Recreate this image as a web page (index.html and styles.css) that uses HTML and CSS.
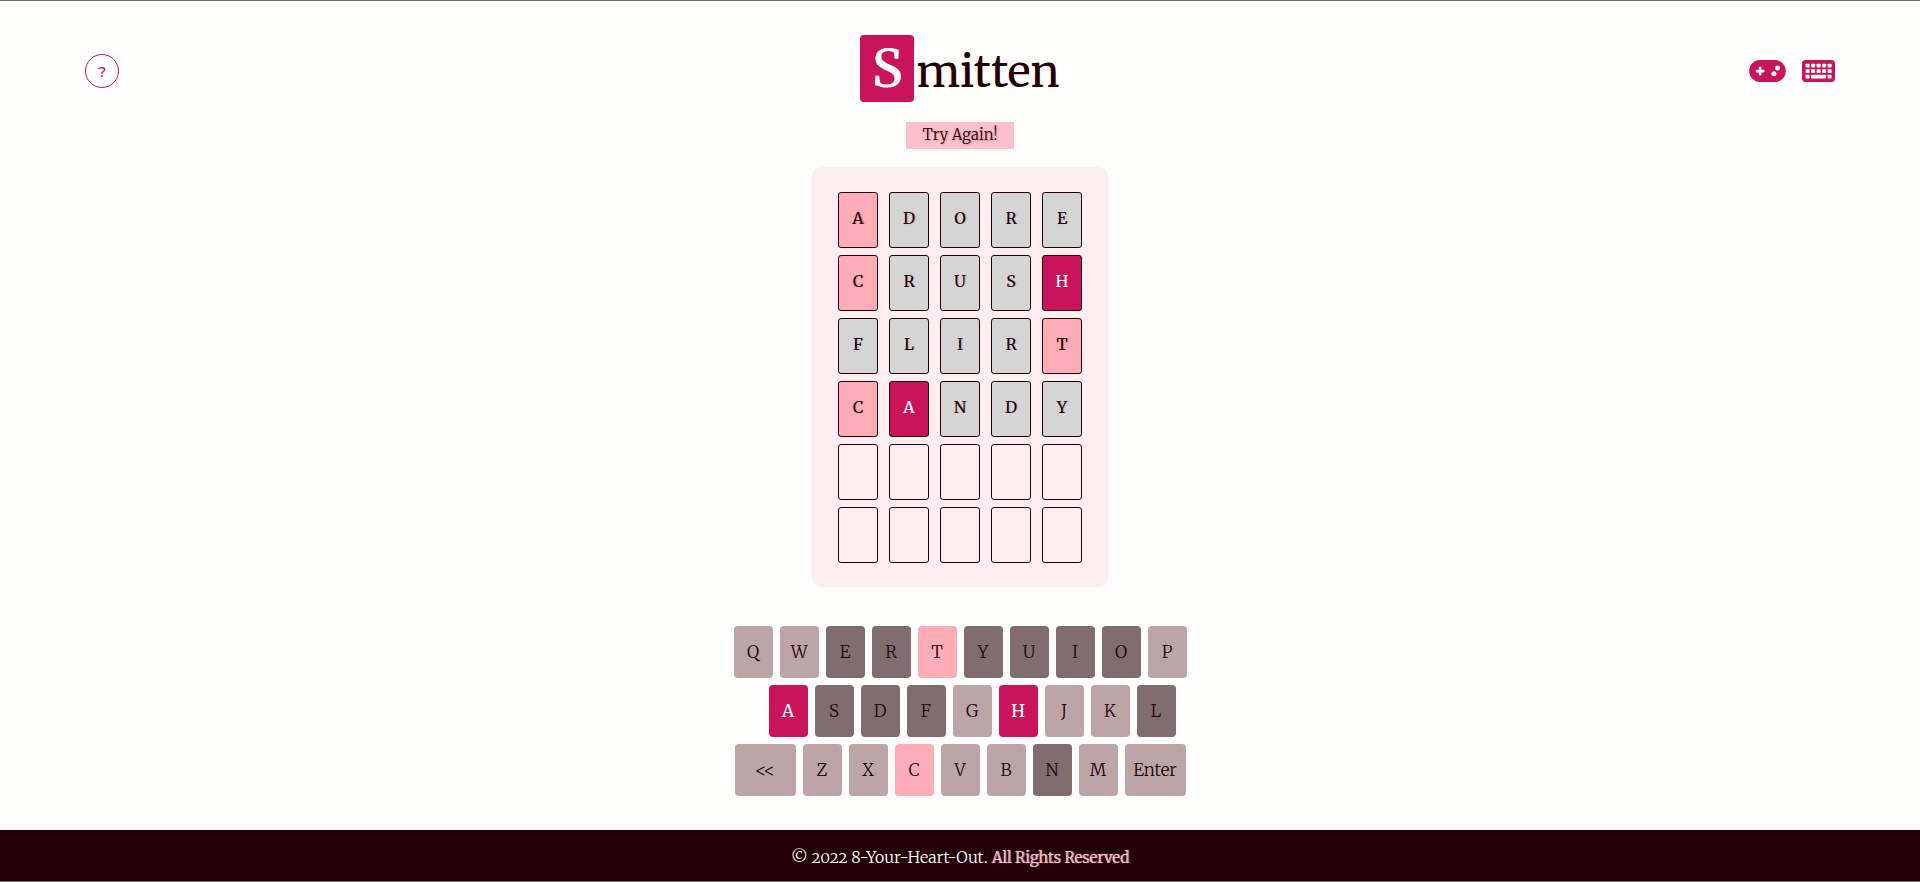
FILE: index.html
```html
<!DOCTYPE html>
<html lang="en">
<head>
<meta charset="utf-8">
<title>Smitten</title>
<link rel="stylesheet" href="styles.css">
</head>
<body>
<header class="header">
  <button class="help" type="button" aria-label="Help">?</button>
  <h1 class="logo"><span class="logo-tile">S</span><span>mitten</span></h1>
  <div class="tools">
    <button class="tool" type="button" aria-label="Game">
      <svg class="icon-pad" viewBox="0 64 640 384" aria-hidden="true"><path fill="currentColor" fill-rule="evenodd" d="M192 64C86 64 0 150 0 256S86 448 192 448H448c106 0 192-86 192-192s-86-192-192-192H192zM496 160a44 44 0 1 1 0 88 44 44 0 1 1 0-88zM388 304a44 44 0 1 1 88 0 44 44 0 1 1-88 0zM168 200c0-13.300 10.700-24 24-24s24 10.700 24 24v32h32c13.300 0 24 10.700 24 24s-10.700 24-24 24H216v32c0 13.300-10.700 24-24 24s-24-10.700-24-24V280H136c-13.300 0-24-10.700-24-24s10.700-24 24-24h32V200z"/></svg>
    </button>
    <button class="tool" type="button" aria-label="Keyboard">
      <svg class="icon-keys" viewBox="0 64 576 384" aria-hidden="true"><rect y="64" width="576" height="384" rx="64" fill="currentColor"/><g fill="#fffefd"><rect x="64" y="128" width="68" height="68" rx="8"/><rect x="160" y="128" width="68" height="68" rx="8"/><rect x="256" y="128" width="68" height="68" rx="8"/><rect x="352" y="128" width="68" height="68" rx="8"/><rect x="448" y="128" width="68" height="68" rx="8"/><rect x="64" y="224" width="68" height="68" rx="8"/><rect x="160" y="224" width="68" height="68" rx="8"/><rect x="256" y="224" width="68" height="68" rx="8"/><rect x="352" y="224" width="68" height="68" rx="8"/><rect x="448" y="224" width="68" height="68" rx="8"/><rect x="64" y="320" width="68" height="68" rx="8"/><rect x="160" y="320" width="260" height="68" rx="8"/><rect x="448" y="320" width="68" height="68" rx="8"/></g></svg>
    </button>
  </div>
</header>
<main class="game">
  <p class="message" role="status">Try Again!</p>
  <div class="board">
    <div class="cell near">A</div><div class="cell miss">D</div><div class="cell miss">O</div><div class="cell miss">R</div><div class="cell miss">E</div>
    <div class="cell near">C</div><div class="cell miss">R</div><div class="cell miss">U</div><div class="cell miss">S</div><div class="cell hit">H</div>
    <div class="cell miss">F</div><div class="cell miss">L</div><div class="cell miss">I</div><div class="cell miss">R</div><div class="cell near">T</div>
    <div class="cell near">C</div><div class="cell hit">A</div><div class="cell miss">N</div><div class="cell miss">D</div><div class="cell miss">Y</div>
    <div class="cell"></div><div class="cell"></div><div class="cell"></div><div class="cell"></div><div class="cell"></div>
    <div class="cell"></div><div class="cell"></div><div class="cell"></div><div class="cell"></div><div class="cell"></div>
  </div>
  <div class="keyboard">
    <div class="keys">
      <button class="key">Q</button><button class="key">W</button><button class="key used">E</button><button class="key used">R</button><button class="key near">T</button><button class="key used">Y</button><button class="key used">U</button><button class="key used">I</button><button class="key used">O</button><button class="key">P</button>
    </div>
    <div class="keys keys-home">
      <button class="key hit">A</button><button class="key used">S</button><button class="key used">D</button><button class="key used">F</button><button class="key">G</button><button class="key hit">H</button><button class="key">J</button><button class="key">K</button><button class="key used">L</button>
    </div>
    <div class="keys">
      <button class="key wide">&lt;&lt;</button><button class="key">Z</button><button class="key">X</button><button class="key near">C</button><button class="key">V</button><button class="key">B</button><button class="key used">N</button><button class="key">M</button><button class="key wide">Enter</button>
    </div>
  </div>
</main>
<footer class="footer"><p class="legal">© 2022 8-Your-Heart-Out. <strong class="rights">All Rights Reserved</strong></p></footer>
</body>
</html>
```
FILE: styles.css
```css
* {
  box-sizing: border-box;
}

body {
  margin: 0;
  min-height: 100vh;
  display: flex;
  flex-direction: column;
  background: #fffefd;
  border-top: 1px solid #65756b;
  border-bottom: 1px solid #65756b;
  color: #240006;
  font-family: Merriweather, "DejaVu Serif Condensed", "DejaVu Serif", serif;
  font-size: 16px;
}

button {
  padding: 0;
  border: 0;
  background: none;
  font: inherit;
  color: inherit;
  cursor: pointer;
}

.header {
  display: grid;
  grid-template: 72px / 1fr auto 1fr;
  align-items: center;
  padding: 34px 85px 15px;
}

.help {
  width: 34px;
  height: 34px;
  border: 1px solid #c9145c;
  border-radius: 50%;
  color: #c9145c;
  font-family: Montserrat, Lato, sans-serif;
  font-size: 15px;
  font-weight: 500;
}

.logo {
  display: flex;
  align-items: baseline;
  align-self: start;
  gap: 2px;
  margin: 0;
  font-size: 44px;
  font-weight: 400;
  line-height: 67px;
}

.logo-tile {
  width: 54px;
  border-radius: 4px;
  background: #c9145c;
  color: #fff;
  font-size: 52px;
  font-weight: 600;
  text-align: center;
}

.tools {
  display: flex;
  justify-content: flex-end;
  gap: 16px;
  color: #c9145c;
}

.tool svg {
  display: block;
  height: 22px;
}

.icon-pad {
  width: 37px;
}

.icon-keys {
  width: 33px;
}

.game {
  display: flex;
  flex-direction: column;
  align-items: center;
}

.message {
  margin: 0 0 18px;
  padding: 0 17px 1px;
  background: #ffc0cb;
  line-height: 26px;
  font-size: 15px;
  font-weight: 300;
  text-shadow: 1px 1px 2px #24000644;
}

.board {
  display: grid;
  grid-template-columns: repeat(5, 40px);
  gap: 7px 11px;
  padding: 25px 26px 24px;
  border-radius: 10px;
  background: #ffeef1;
  box-shadow: 0 0 2px #ffeef1;
}

.cell {
  height: 56px;
  border: 1px solid #240006;
  border-radius: 3px;
  line-height: 51px;
  text-align: center;
  text-shadow: 1px 0 1px #24000633;
}

.miss {
  background: #d5d5d5;
}

.near {
  background: #ffacb9;
}

.hit {
  background: #c9145c;
  color: #fff;
  text-shadow: none;
}

.keyboard {
  display: flex;
  flex-direction: column;
  gap: 7px;
  margin: 39px 0 34px;
}

.keys {
  display: flex;
  justify-content: center;
  gap: 7px;
}

.keys-home {
  padding-left: 24px;
}

.key {
  width: 39px;
  height: 52px;
  border-radius: 4px;
  background: #bda4a7;
  font-size: 17px;
  font-weight: 300;
}

.key.wide {
  width: 61px;
}

.key.used {
  background: #806d70;
}

.key.near {
  background: #ffacb9;
}

.key.hit {
  background: #c9145c;
  color: #fff;
  font-weight: 400;
}

.footer {
  margin-top: auto;
  padding: 16px 14px 12px;
  background: #240006;
  color: #fff;
  text-align: center;
}

.legal {
  margin: 0;
  font-size: 16px;
  font-weight: 300;
  font-variant-numeric: oldstyle-nums;
  line-height: 23px;
}

.rights {
  color: #ffc0cb;
  font-size: 15px;
  font-weight: 300;
  text-shadow: 1px 0 1px #ffc0cb;
}
```
